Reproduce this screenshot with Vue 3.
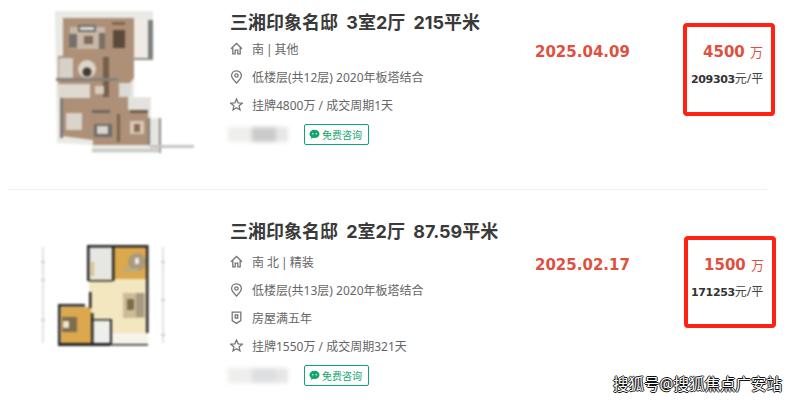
<script setup>
const ICONS = {
  home: 'M1 6.8 L6.5 1.5 L12 6.8 M2.8 5.4 V11.8 H5.2 V8.2 H7.8 V11.8 H10.2 V5.4',
  pin: 'M6.5 0.8 C3.6 0.8 1.6 3 1.6 5.5 C1.6 8.3 4.6 11 6.5 13 C8.4 11 11.4 8.3 11.4 5.5 C11.4 3 9.4 0.8 6.5 0.8 Z M6.5 3.8 A1.7 1.7 0 1 1 6.5 7.2 A1.7 1.7 0 1 1 6.5 3.8 Z',
  star: 'M6.5 1 L8.1 4.8 L12.2 5.2 L9.1 7.8 L10 11.8 L6.5 9.7 L3 11.8 L3.9 7.8 L0.8 5.2 L4.9 4.8 Z',
  shield: 'M2.2 1.2 H10.8 V9.6 L6.5 12.4 L2.2 9.6 Z M5.2 4 H7.8 V7 H5.2 Z',
}

const listings = [
  {
    id: 1,
    title: '三湘印象名邸 3室2厅 215平米',
    date: '2025.04.09',
    price: '4500',
    unit: '209303',
    plan: 'large',
    lines: [
      { icon: 'home', text: '南\u2009|\u2009其他' },
      { icon: 'pin', text: '低楼层(共12层) 2020年板塔结合' },
      { icon: 'star', text: '挂牌4800万 / 成交周期1天' },
    ],
  },
  {
    id: 2,
    title: '三湘印象名邸 2室2厅 87.59平米',
    date: '2025.02.17',
    price: '1500',
    unit: '171253',
    plan: 'small',
    lines: [
      { icon: 'home', text: '南 北\u2009|\u2009精装' },
      { icon: 'pin', text: '低楼层(共13层) 2020年板塔结合' },
      { icon: 'shield', text: '房屋满五年' },
      { icon: 'star', text: '挂牌1550万 / 成交周期321天' },
    ],
  },
]

// large plan furniture and rooms: x, y, w, h, colour
const largeRooms = [
  [134, 20, 14, 40, '#efebe4'],
  [148, 20, 5, 40, '#7d7f80'],
  [134, 58, 19, 2, '#8b8b8a'],
  [70, 27, 35, 22, '#c8b8a7'],
  [78, 25, 18, 7, '#6f6b66'],
  [80, 27, 14, 3, '#e4e2dd'],
  [69, 34, 8, 14, '#77706a'],
  [99, 33, 6, 16, '#7b6f64'],
  [84, 36, 9, 8, '#806a58'],
  [113, 30, 12, 18, '#5d493c'],
  [112, 22, 13, 3, '#7f6450'],
  [103, 57, 6, 40, '#755e4c'],
  [59, 58, 14, 20, '#d6d2ca'],
  [56, 78, 62, 3, '#85817c'],
  [58, 84, 32, 14, '#dedad2'],
  [95, 86, 9, 8, '#d9cdbd'],
  [119, 83, 12, 14, '#dcdad5'],
  [128, 98, 22, 12, '#e4e2dd'],
  [60, 98, 3, 40, '#7c7a78'],
  [66, 113, 16, 17, '#dad4cb'],
  [92, 110, 18, 3, '#6e665f'],
  [130, 110, 18, 3, '#6e5c4c'],
  [94, 124, 18, 13, '#706b67'],
  [97, 126, 11, 8, '#d8d6d2'],
  [130, 121, 14, 13, '#d7cabb'],
  [134, 124, 6, 8, '#8c6a50'],
  [117, 114, 3, 28, '#79634f'],
  [149, 120, 11, 32, '#e6e4df'],
  [148, 118, 2, 27, '#7b7a78'],
  [159, 118, 2, 35, '#8a8a89'],
  [92, 149, 68, 3, '#c9c9c5'],
]

// small plan rooms
const smallRooms = [
  [89, 247, 23, 34, '#e6e6e2'],
  [114, 247, 32, 32, '#dca84d'],
  [89, 279, 57, 54, '#f3e7bf'],
  [123, 293, 22, 25, '#cdbb98'],
  [127, 299, 7, 11, '#7e6c47'],
  [136, 293, 8, 24, '#a89a80'],
  [61, 307, 30, 36, '#dca84d'],
  [62, 317, 15, 15, '#7d6d4c'],
  [92, 313, 20, 8, '#f3e7bf'],
  [93, 321, 17, 22, '#eeeeec'],
  [112, 333, 36, 12, '#f6f4ea'],
  [91, 262, 3, 14, '#d8c27f'],
]

// small plan walls
const smallWalls = [
  [87, 245, 26, 2.5],
  [112, 245, 36, 2.5],
  [87, 245, 2.5, 36],
  [112, 245, 2.5, 36],
  [146, 245, 2.5, 88],
  [89, 280, 23, 1.5],
  [89, 292, 2.5, 16],
  [58, 304, 27, 2.5],
  [58, 304, 2.5, 42],
  [58, 343, 52, 3],
  [91, 313, 2.5, 31],
  [93, 319, 17, 1.5],
  [110, 319, 2, 26],
  [110, 344, 38, 1.5],
]
</script>

<template>
  <div class="page">
    <div v-for="item in listings" :key="item.id" class="listing" :class="'listing-' + item.id">
      <div class="row">
        <div class="plan">
          <svg v-if="item.plan === 'large'" class="plan-img" width="230" height="170" viewBox="0 0 230 170">
            <polygon
              points="55,11 153,11 153,60 134,60 134,97 151,97 151,118 161,118 161,153 92,153 92,145 57,143"
              fill="#e9e9e5"
            />
            <polygon
              points="63,18 134,18 134,78 118,97 128,97 128,110 148,110 148,145 93,145 93,140 62,136 62,98 58,81 58,56 63,56"
              fill="#ad9077"
            />
            <rect
              v-for="(r, i) in largeRooms"
              :key="i"
              :x="r[0]"
              :y="r[1]"
              :width="r[2]"
              :height="r[3]"
              :fill="r[4]"
            />
            <circle cx="87" cy="69" r="9" fill="#ddd5c9" />
            <circle cx="87" cy="72" r="4.5" fill="#463b34" />
            <rect x="150" y="145" width="44" height="3" fill="#c4c4c4" />
          </svg>
          <svg v-else class="plan-img" width="230" height="170" viewBox="0 230 230 170">
            <rect
              v-for="(r, i) in smallRooms"
              :key="i"
              :x="r[0]"
              :y="r[1]"
              :width="r[2]"
              :height="r[3]"
              :fill="r[4]"
            />
            <rect x="63" y="321" width="6" height="7" fill="#efe6cf" />
            <circle cx="137" cy="262" r="9" fill="#a89a7a" />
            <rect x="135" y="258" width="4" height="6" fill="#eee" />
            <rect x="124" y="268" width="14" height="4" fill="#b8ab86" />
            <rect
              v-for="(w, i) in smallWalls"
              :key="'w' + i"
              :x="w[0]"
              :y="w[1]"
              :width="w[2]"
              :height="w[3]"
              fill="#232323"
            />
            <path d="M43 247 V343 M163 247 V343" stroke="#c4c4c4" stroke-width="1" fill="none" />
            <path d="M41 262 h4 M41 280 h4 M41 320 h4 M161 262 h4 M161 300 h4 M161 335 h4" stroke="#b0b0b0" stroke-width="1" fill="none" />
          </svg>
        </div>

        <div class="info">
          <h3 class="title">{{ item.title }}</h3>
          <div v-for="line in item.lines" :key="line.icon" class="line">
            <svg class="line-icon" width="13" height="14" viewBox="0 0 13 14">
              <path :d="ICONS[line.icon]" fill="none" stroke="#777" stroke-width="1.3" />
            </svg>
            <span>{{ line.text }}</span>
          </div>
          <div class="agent">
            <div class="agent-blur">
              <span class="blur-a"></span>
              <span class="blur-b"></span>
              <span class="blur-c"></span>
            </div>
            <a class="consult">
              <svg width="11" height="11" viewBox="0 0 11 11">
                <path d="M5.5 0.8 C2.6 0.8 0.5 2.6 0.5 4.9 C0.5 6.2 1.2 7.3 2.3 8 L2 9.9 L4 8.8 C4.5 8.9 5 9 5.5 9 C8.4 9 10.5 7.2 10.5 4.9 C10.5 2.6 8.4 0.8 5.5 0.8 Z" fill="#12a66c" />
                <circle cx="3.8" cy="4.8" r="0.7" fill="#fff" />
                <circle cx="7.2" cy="4.8" r="0.7" fill="#fff" />
              </svg>
              <span>免费咨询</span>
            </a>
          </div>
        </div>

        <div class="side">
          <div class="date">{{ item.date }}</div>
          <div class="price-box">
            <div class="price"><b>{{ item.price }}</b> <span>万</span></div>
            <div class="unit"><b>{{ item.unit }}</b>元/平</div>
          </div>
        </div>
      </div>
      <div v-if="item.id === 1" class="divider"></div>
    </div>
    <div class="watermark">搜狐号@搜狐焦点广安站</div>
  </div>
</template>

<style>
html,
body {
  margin: 0;
  background: #fff;
  overflow: hidden;
}
</style>

<style scoped>
.page {
  position: relative;
  width: 797px;
  height: 402px;
  overflow: hidden;
  background: #fff;
  font-family: "Noto Sans", "Noto Sans CJK SC", sans-serif;
  color: #666;
}

.row {
  display: flex;
}

.listing-1 .row {
  height: 189px;
  padding-top: 11px;
  box-sizing: border-box;
}

.listing-2 .row {
  padding-top: 30px;
}

.divider {
  height: 1px;
  margin: 0 30px 0 8px;
  background: #f0f0f0;
}

.plan {
  flex: none;
  width: 230px;
  position: relative;
}

.plan-img {
  position: absolute;
  left: 0;
  filter: blur(0.8px);
}

.listing-1 .plan-img {
  top: -11px;
}

.listing-2 .plan-img {
  top: 10px;
}

.info {
  flex: none;
  width: 305px;
}

.title {
  margin: 0;
  height: 24px;
  line-height: 24px;
  font-family: Inter, "Noto Sans CJK SC", sans-serif;
  font-size: 18px;
  font-weight: 700;
  word-spacing: 4px;
  color: #3a3a3a;
  white-space: nowrap;
}

.listing-2 .title {
  margin-bottom: 4px;
}

.line {
  display: flex;
  align-items: center;
  height: 28px;
  font-size: 12px;
  white-space: nowrap;
}

.line-icon {
  flex: none;
  margin-right: 9px;
}

.agent {
  display: flex;
  align-items: center;
  height: 21px;
  margin-top: 5px;
}

.agent-blur {
  display: flex;
  width: 60px;
  height: 15px;
  margin-left: -2px;
  margin-right: 16px;
  filter: blur(2px);
}

.blur-a {
  width: 24px;
  background: #eeeeec;
}

.blur-b {
  width: 24px;
  background: #cbcbcb;
}

.blur-c {
  width: 12px;
  background: #e6e6e6;
}

.listing-2 .blur-b {
  background: #dedfe0;
}

.consult {
  display: flex;
  align-items: center;
  gap: 2px;
  box-sizing: border-box;
  width: 65px;
  height: 21px;
  padding-left: 4px;
  border: 1px solid #12a66c;
  border-radius: 2px;
  font-size: 10px;
  color: #12a66c;
  white-space: nowrap;
}

.side {
  display: flex;
  flex: none;
}

.listing-1 .side {
  margin-top: 12px;
}

.listing-2 .side {
  margin-top: 16px;
}

.date {
  width: 148px;
  padding-top: 20px;
  font-family: "DejaVu Sans", sans-serif;
  font-size: 15px;
  font-weight: 700;
  line-height: 18px;
  color: #e0503f;
}

.listing-2 .date {
  width: 149px;
}

.price-box {
  box-sizing: border-box;
  width: 92px;
  height: 92px;
  padding-top: 13px;
  border: 4px solid #ff2111;
  border-radius: 4px;
}

.listing-1 .price-box {
  height: 93px;
}

.price {
  height: 22px;
  line-height: 22px;
  padding-right: 8px;
  text-align: right;
  color: #e0503f;
  white-space: nowrap;
}

.price b {
  font-family: "DejaVu Sans", sans-serif;
  font-size: 15px;
  margin-right: 1px;
}

.price span {
  font-size: 13px;
}

.unit {
  margin-top: 8px;
  padding-left: 4px;
  font-size: 12px;
  line-height: 18px;
  color: #444;
  white-space: nowrap;
}

.listing-2 .unit {
  padding-left: 3px;
}

.unit b {
  font-family: "DejaVu Sans", sans-serif;
  font-size: 11px;
  letter-spacing: -0.35px;
  color: #333;
}

.watermark {
  position: absolute;
  right: 15px;
  top: 374px;
  font-size: 15.5px;
  line-height: 20px;
  color: #fff;
  text-shadow: -1px 0 #111, 1px 0 #111, 0 -1px #111, 0 1px #111;
  white-space: nowrap;
}
</style>
